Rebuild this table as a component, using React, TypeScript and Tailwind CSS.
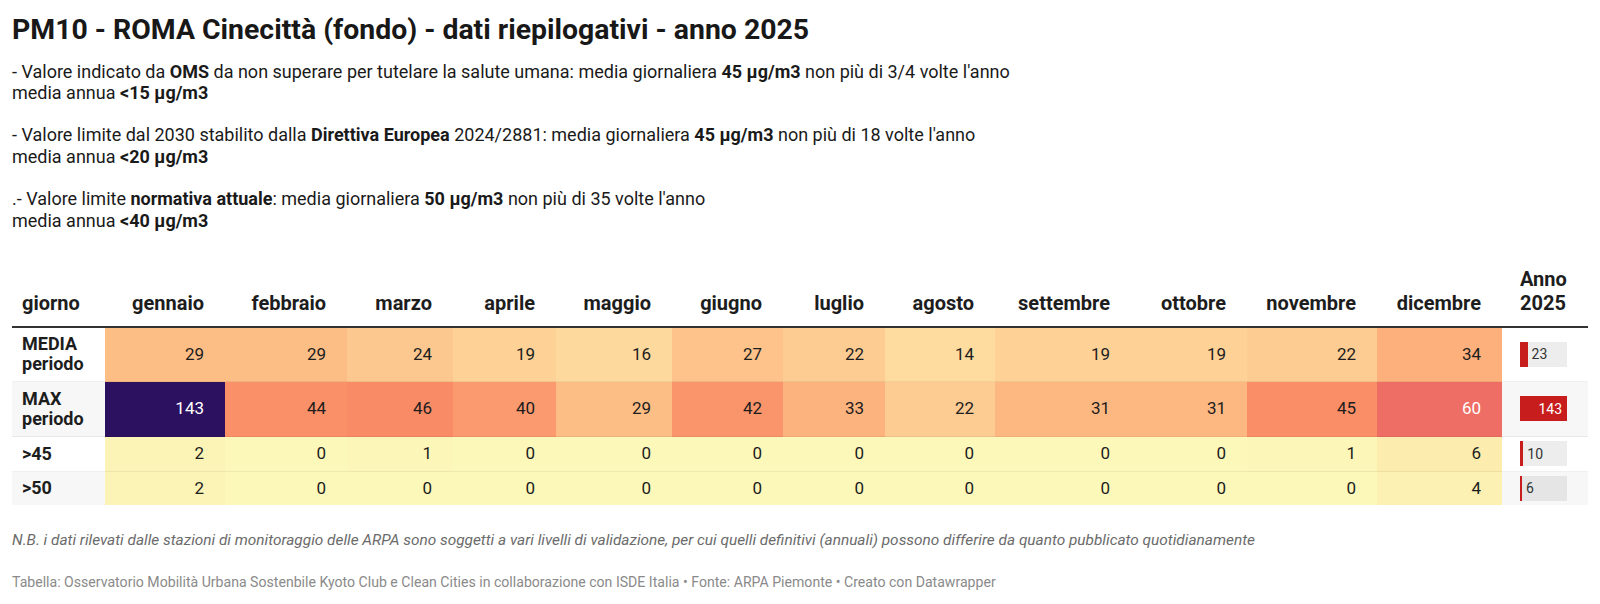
import React from 'react'

const months = [
  'gennaio',
  'febbraio',
  'marzo',
  'aprile',
  'maggio',
  'giugno',
  'luglio',
  'agosto',
  'settembre',
  'ottobre',
  'novembre',
  'dicembre',
]

// heatmap colours, one per value that appears in the table
const heat: Record<number, string> = {
  0: 'bg-[#fcf8ba]',
  1: 'bg-[#fcf6b8]',
  2: 'bg-[#fcf4b6]',
  4: 'bg-[#fcf1b3]',
  6: 'bg-[#fcedaf]',
  14: 'bg-[#fedca0]',
  16: 'bg-[#fed99d]',
  19: 'bg-[#fed297]',
  22: 'bg-[#fdcc92]',
  24: 'bg-[#fdc88f]',
  27: 'bg-[#fdc38a]',
  29: 'bg-[#fdbe86]',
  31: 'bg-[#fdb882]',
  33: 'bg-[#fdb37e]',
  34: 'bg-[#fdb07c]',
  40: 'bg-[#fb9a6e]',
  42: 'bg-[#fa946a]',
  44: 'bg-[#fa9068]',
  45: 'bg-[#fa8e67]',
  46: 'bg-[#f98b66]',
  60: 'bg-[#ee6e66] text-white',
  143: 'bg-[#2c1160] text-white',
}

const rows = [
  {
    label: ['MEDIA', 'periodo'],
    values: [29, 29, 24, 19, 16, 27, 22, 14, 19, 19, 22, 34],
    total: 23,
    height: 'h-[54px] border-b',
    stripe: false,
  },
  {
    label: ['MAX', 'periodo'],
    values: [143, 44, 46, 40, 29, 42, 33, 22, 31, 31, 45, 60],
    total: 143,
    height: 'h-[55px] border-b',
    stripe: true,
  },
  {
    label: ['>45'],
    values: [2, 0, 1, 0, 0, 0, 0, 0, 0, 0, 1, 6],
    total: 10,
    height: 'h-[35px] border-b',
    stripe: false,
  },
  {
    label: ['>50'],
    values: [2, 0, 0, 0, 0, 0, 0, 0, 0, 0, 0, 4],
    total: 6,
    height: 'h-[33px]',
    stripe: true,
  },
]

const MAX_TOTAL = 143

const cols =
  'grid grid-cols-[93px_120px_122px_106px_103px_116px_111px_102px_110px_136px_116px_130px_125px_86px]'

function YearBar({ value }: { value: number }) {
  const full = value >= MAX_TOTAL
  return (
    <div className="flex h-[25px] w-[47px] items-center bg-[#00000012] text-[14px] leading-none">
      {full ? (
        <div className="flex h-full w-full items-center justify-end bg-[#c71e1d] pr-[5px] text-white">
          {value}
        </div>
      ) : (
        <>
          <div
            className="h-full bg-[#c71e1d]"
            style={{ width: `${(value / MAX_TOTAL) * 100}%` }}
          />
          <span className="ml-[4px] text-[#333]">{value}</span>
        </>
      )}
    </div>
  )
}

export default function App() {
  return (
    <div className="h-[604px] w-[1600px] overflow-hidden bg-white px-3 pt-[13.5px] font-[Roboto,sans-serif] text-[#181818]">
      <h1 className="text-[28.4px] font-bold leading-[31px]">
        PM10 - ROMA Cinecittà (fondo) - dati riepilogativi - anno 2025
      </h1>

      <p className="mt-[16px] text-[18px] leading-[21.3px] text-[#1a1a1a]">
        - Valore indicato da <b>OMS</b> da non superare per tutelare la salute umana: media giornaliera{' '}
        <b>45 µg/m3</b> non più di 3/4 volte l'anno
        <br />
        media annua <b>&lt;15 µg/m3</b>
        <br />
        <br />
        - Valore limite dal 2030 stabilito dalla <b>Direttiva Europea</b> 2024/2881: media giornaliera{' '}
        <b>45 µg/m3</b> non più di 18 volte l'anno
        <br />
        media annua <b>&lt;20 µg/m3</b>
        <br />
        <br />
        .- Valore limite <b>normativa attuale</b>: media giornaliera <b>50 µg/m3</b> non più di 35 volte
        l'anno
        <br />
        media annua <b>&lt;40 µg/m3</b>
      </p>

      <div className="mt-[27px] text-[17px] text-[#1d1d1d]">
        <div className={`${cols} h-[70px] border-b-2 border-[#333] text-[20px] font-bold leading-[24px]`}>
          <div className="flex items-end pb-[11px] pl-[10px]">giorno</div>
          {months.map((m) => (
            <div key={m} className="flex items-end justify-end pb-[11px] pr-[21px]">
              {m}
            </div>
          ))}
          <div className="flex items-end pb-[11px] pl-[18px]">
            Anno
            <br />
            2025
          </div>
        </div>

        {rows.map((row) => (
          <div key={row.label.join(' ')} className={cols}>
            <div
              className={`${row.height} flex flex-col justify-center border-[#0000000f] pl-[10px] text-[18px] font-bold leading-[20px] ${
                row.stripe ? 'bg-[#f7f7f7]' : 'bg-white'
              }`}
            >
              {row.label.map((l) => (
                <span key={l}>{l}</span>
              ))}
            </div>
            {row.values.map((v, i) => (
              <div
                key={i}
                className={`${row.height} flex items-center justify-end border-[#0000000f] pr-[21px] ${heat[v]}`}
              >
                {v}
              </div>
            ))}
            <div
              className={`${row.height} flex items-center border-[#0000000f] pl-[18px] ${
                row.stripe ? 'bg-[#f7f7f7]' : 'bg-white'
              }`}
            >
              <YearBar value={row.total} />
            </div>
          </div>
        ))}
      </div>

      <p className="mt-[25px] text-[15.4px] italic leading-[20px] text-[#6b6b6b]">
        N.B. i dati rilevati dalle stazioni di monitoraggio delle ARPA sono soggetti a vari livelli di validazione,
        per cui quelli definitivi (annuali) possono differire da quanto pubblicato quotidianamente
      </p>

      <p className="mt-[23px] text-[14.1px] leading-[18px] text-[#8a8a8a]">
        Tabella: Osservatorio Mobilità Urbana Sostenbile Kyoto Club e Clean Cities in collaborazione con ISDE
        Italia • Fonte: ARPA Piemonte • Creato con Datawrapper
      </p>
    </div>
  )
}
